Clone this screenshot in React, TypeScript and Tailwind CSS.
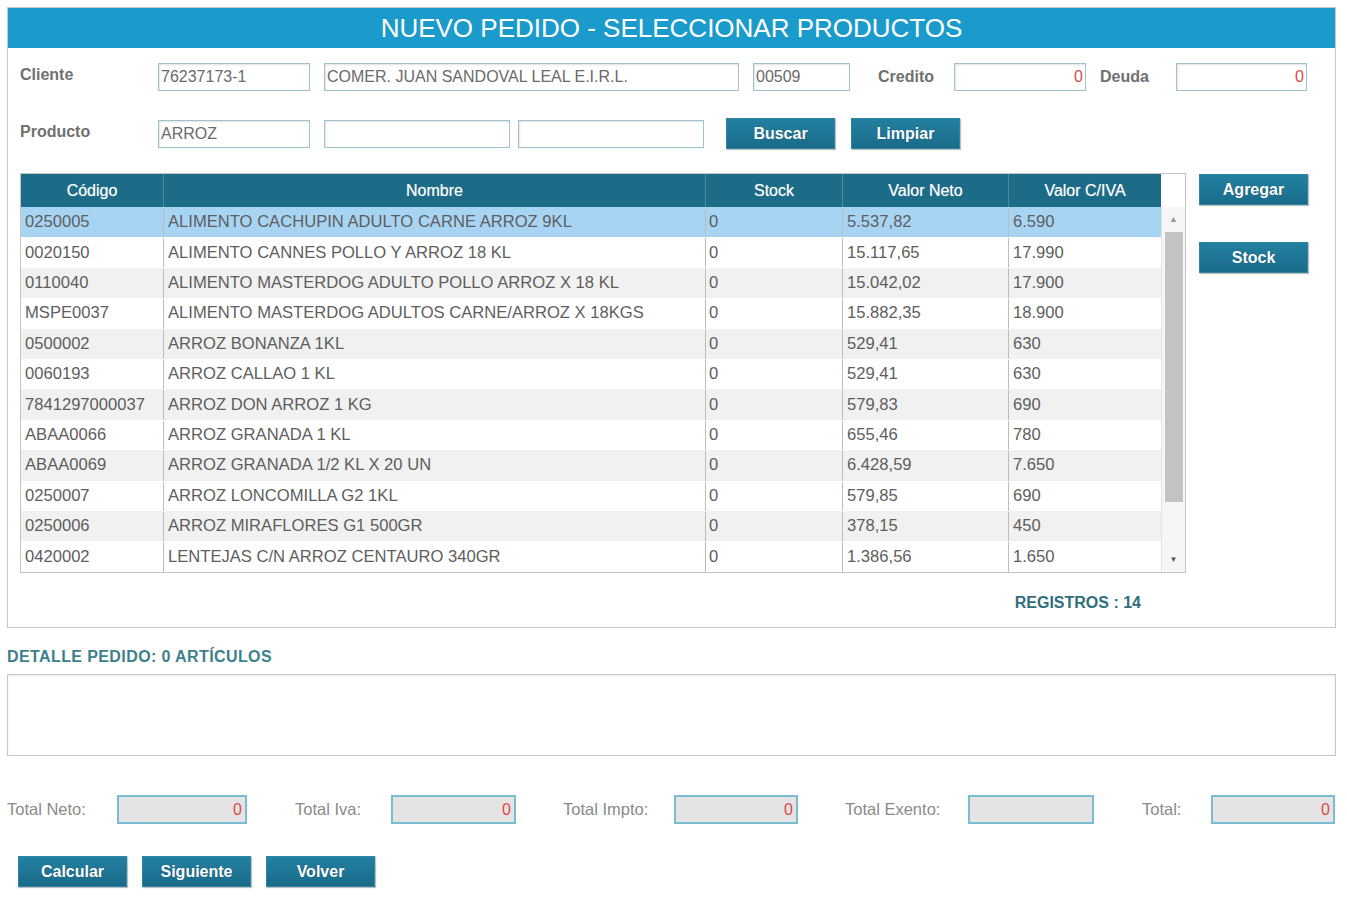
import React from "react";

type Row = [string, string, string, string, string];

const rows: Row[] = [
  ["0250005", "ALIMENTO CACHUPIN ADULTO CARNE ARROZ 9KL", "0", "5.537,82", "6.590"],
  ["0020150", "ALIMENTO CANNES POLLO Y ARROZ 18 KL", "0", "15.117,65", "17.990"],
  ["0110040", "ALIMENTO MASTERDOG ADULTO POLLO ARROZ X 18 KL", "0", "15.042,02", "17.900"],
  ["MSPE0037", "ALIMENTO MASTERDOG ADULTOS CARNE/ARROZ X 18KGS", "0", "15.882,35", "18.900"],
  ["0500002", "ARROZ BONANZA 1KL", "0", "529,41", "630"],
  ["0060193", "ARROZ CALLAO 1 KL", "0", "529,41", "630"],
  ["7841297000037", "ARROZ DON ARROZ 1 KG", "0", "579,83", "690"],
  ["ABAA0066", "ARROZ GRANADA 1 KL", "0", "655,46", "780"],
  ["ABAA0069", "ARROZ GRANADA 1/2 KL X 20 UN", "0", "6.428,59", "7.650"],
  ["0250007", "ARROZ LONCOMILLA G2 1KL", "0", "579,85", "690"],
  ["0250006", "ARROZ MIRAFLORES G1 500GR", "0", "378,15", "450"],
  ["0420002", "LENTEJAS C/N ARROZ CENTAURO 340GR", "0", "1.386,56", "1.650"],
];

const cols = [
  { title: "Código", w: "w-[142px]" },
  { title: "Nombre", w: "w-[542px]" },
  { title: "Stock", w: "w-[137px]" },
  { title: "Valor Neto", w: "w-[166px]" },
  { title: "Valor C/IVA", w: "w-[153px]" },
];

function Field({ w, value, right }: { w: string; value?: string; right?: boolean }) {
  return (
    <div
      className={`${w} h-[28px] shrink-0 border border-[#9dc4ca] bg-white shadow-[inset_1px_1px_2px_rgba(0,0,0,0.12)] flex items-center px-[2px] text-[16px] text-[#6a6a6a] ${right ? "justify-end text-[#e0474c]" : ""}`}
    >
      {value}
    </div>
  );
}

function Btn({ label, className = "" }: { label: string; className?: string }) {
  return (
    <button
      className={`w-[109px] h-[31px] shrink-0 bg-gradient-to-b from-[#2380a0] to-[#1a6b8a] border border-[#2f86a3] shadow-[1px_1px_1px_rgba(0,0,0,0.25)] text-white text-[16px] font-bold [text-shadow:0_0_1px_rgba(0,0,0,0.4)] ${className}`}
    >
      {label}
    </button>
  );
}

function TotalBox({ value }: { value?: string }) {
  return (
    <div className="w-full h-[29px] border-2 border-[#7bbcd2] bg-[#e4e4e4] flex items-center justify-end pr-[3px] text-[16px] text-[#e0474c]">
      {value}
    </div>
  );
}

export default function App() {
  const totals = [
    { label: "Total Neto:", lw: "w-[110px]", iw: "w-[130px]", ml: "ml-0", v: "0" },
    { label: "Total Iva:", lw: "w-[96px]", iw: "w-[125px]", ml: "ml-[48px]", v: "0" },
    { label: "Total Impto:", lw: "w-[111px]", iw: "w-[124px]", ml: "ml-[47px]", v: "0" },
    { label: "Total Exento:", lw: "w-[123px]", iw: "w-[126px]", ml: "ml-[47px]", v: "" },
    { label: "Total:", lw: "w-[69px]", iw: "w-[124px]", ml: "ml-[48px]", v: "0" },
  ];

  return (
    <div className="w-[1347px] h-[900px] bg-white pt-[7px] font-['Liberation_Sans',Arial,sans-serif] overflow-hidden">
      {/* panel */}
      <div className="ml-[7px] w-[1329px] h-[621px] border border-[#c6c6c6]">
        <div className="h-[40px] bg-[#1b9bcb] flex items-center justify-center text-white text-[26px]">
          NUEVO PEDIDO - SELECCIONAR PRODUCTOS
        </div>

        <div className="pl-[12px] pt-[15px]">
          {/* cliente */}
          <div className="flex items-center h-[28px]">
            <span className="w-[138px] shrink-0 -mt-[4px] text-[16px] font-bold text-[#707070]">Cliente</span>
            <Field w="w-[152px]" value="76237173-1" />
            <div className="w-[14px]" />
            <Field w="w-[415px]" value="COMER. JUAN SANDOVAL LEAL E.I.R.L." />
            <div className="w-[14px]" />
            <Field w="w-[97px]" value="00509" />
            <span className="w-[76px] ml-[28px] shrink-0 text-[16px] font-bold text-[#707070]">Credito</span>
            <Field w="w-[132px]" value="0" right />
            <span className="w-[76px] ml-[14px] shrink-0 text-[16px] font-bold text-[#707070]">Deuda</span>
            <Field w="w-[131px]" value="0" right />
          </div>

          {/* producto */}
          <div className="flex items-center h-[31px] mt-[27px]">
            <span className="w-[138px] shrink-0 -mt-[4px] text-[16px] font-bold text-[#707070]">Producto</span>
            <Field w="w-[152px]" value="ARROZ" />
            <div className="w-[14px]" />
            <Field w="w-[186px]" />
            <div className="w-[8px]" />
            <Field w="w-[186px]" />
            <Btn label="Buscar" className="ml-[22px]" />
            <Btn label="Limpiar" className="ml-[16px]" />
          </div>

          {/* grid */}
          <div className="flex mt-[24px]">
            <div className="w-[1166px] h-[400px] border border-[#c4c4c4] flex shrink-0 overflow-hidden">
              <div className="w-[1140px]">
                <div className="flex h-[33px] bg-[#1c6b87] text-white text-[16px]">
                  {cols.map((c, i) => (
                    <div
                      key={c.title}
                      className={`${c.w} flex items-center justify-center [text-shadow:0_0_1px_rgba(255,255,255,0.5)] ${i > 0 ? "border-l border-[#4d8aa0]" : ""}`}
                    >
                      {c.title}
                    </div>
                  ))}
                </div>
                {rows.map((r, ri) => (
                  <div
                    key={r[0]}
                    className={`flex h-[30.4px] pt-[1px] text-[16.6px] text-[#5e5e5e] ${ri === 0 ? "bg-[#a8d4f4]" : ri % 2 === 0 ? "bg-[#f1f1f1]" : "bg-white"}`}
                  >
                    {r.map((cell, ci) => (
                      <div
                        key={ci}
                        className={`${cols[ci].w} flex items-center whitespace-nowrap overflow-hidden ${ci === 0 ? "pl-[4px]" : ci === 2 ? "pl-[3px] border-l border-[#bdbdbd]" : "pl-[4px] border-l border-[#bdbdbd]"}`}
                      >
                        {cell}
                      </div>
                    ))}
                  </div>
                ))}
              </div>
              {/* scrollbar */}
              <div className="w-[24px] flex flex-col">
                <div className="h-[33px] bg-white" />
                <div className="flex-1 bg-[#f6f6f6] border-l border-[#e2e2e2] flex flex-col items-center">
                  <div className="h-[25px] flex items-center justify-center text-[#9a9a9a] text-[9px]">▲</div>
                  <div className="w-[18px] h-[270px] bg-[#c3c3c3]" />
                  <div className="flex-1" />
                  <div className="h-[25px] flex items-center justify-center text-[#555] text-[8px]">▼</div>
                </div>
              </div>
            </div>
            <div className="ml-[13px] flex flex-col">
              <Btn label="Agregar" className="mt-[1px]" />
              <Btn label="Stock" className="mt-[37px]" />
            </div>
          </div>

          <div className="w-[1121px] mt-[18px] text-right text-[16px] font-bold text-[#2f6f7c]">REGISTROS : 14</div>
        </div>
      </div>

      {/* detalle */}
      <div className="ml-[7px] mt-[17px] text-[16px] font-bold text-[#3d7f8b] tracking-[0.4px]">
        DETALLE PEDIDO: 0 ARTÍCULOS
      </div>
      <div className="ml-[7px] mt-[5px] w-[1329px] h-[82px] border border-[#c6c6c6] shadow-[inset_0_1px_2px_rgba(0,0,0,0.08)]" />

      {/* totals */}
      <div className="ml-[7px] mt-[39px] flex items-center">
        {totals.map((t) => (
          <div key={t.label} className={`flex items-center ${t.ml}`}>
            <span className={`${t.lw} shrink-0 text-[16.5px] text-[#8a8a8a]`}>{t.label}</span>
            <div className={`${t.iw}`}>
              <TotalBox value={t.v} />
            </div>
          </div>
        ))}
      </div>

      <div className="ml-[18px] mt-[32px] flex gap-[15px]">
        <Btn label="Calcular" />
        <Btn label="Siguiente" />
        <Btn label="Volver" />
      </div>
    </div>
  );
}
